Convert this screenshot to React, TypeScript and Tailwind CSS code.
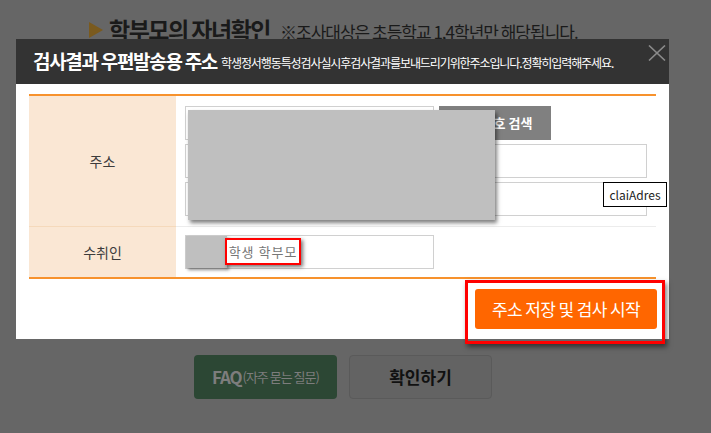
import React from "react";

const font = { fontFamily: '"Noto Sans CJK KR", "Noto Sans", sans-serif' };

function CloseIcon() {
  return (
    <svg width="18" height="16" viewBox="0 0 18 16" className="block">
      <path d="M1 0.5 L17 15.5 M17 0.5 L1 15.5" stroke="#8a8a8a" strokeWidth="1.6" fill="none" />
    </svg>
  );
}

function Arrow() {
  return (
    <svg width="14" height="16" viewBox="0 0 14 16" className="block">
      <path d="M0 0 L14 8 L0 16 Z" fill="#7a5a1e" />
    </svg>
  );
}

function AddressModal() {
  return (
    <div className="absolute left-[16px] top-[39px] w-[653px] h-[300px] bg-white">
      <div className="h-[45px] bg-[#333333] flex items-center pl-[17px] relative">
        <span className="text-white font-bold text-[19px] tracking-[-1.3px]">검사결과 우편발송용 주소</span>
        <span className="text-white text-[12px] tracking-[-1.1px] ml-[4px] mt-[3px]">
          학생정서행동특성검사실시후검사결과를보내드리기위한주소입니다.정확히입력해주세요.
        </span>
        <div className="absolute left-[632px] top-[6px]">
          <CloseIcon />
        </div>
      </div>

      <div className="px-[13px] pt-[10px]">
        <div className="border-t-2 border-b-2 border-[#f7922d]">
          <div className="flex h-[131px] border-b border-[#ececec]">
            <div className="w-[147px] bg-[#fae7d4] border-b border-[#f5d9bb] -mb-px flex items-center justify-center text-[14px] text-[#3c3c3c]">
              주소
            </div>
            <div className="flex-1 pl-[9px] pt-[10px] flex flex-col gap-[4px]">
              <div className="flex gap-[5px]">
                <div className="w-[249px] h-[34px] border border-[#d0d0d0] bg-white" />
                <div className="w-[112px] h-[34px] bg-[#808080] text-white font-bold text-[13px] flex items-center justify-center">
                  우편번호 검색
                </div>
              </div>
              <div className="w-[462px] h-[34px] border border-[#d0d0d0] bg-white" />
              <div className="w-[462px] h-[34px] border border-[#d0d0d0] bg-white" />
            </div>
          </div>
          <div className="flex h-[50px]">
            <div className="w-[147px] bg-[#fae7d4] flex items-center justify-center text-[14px] text-[#3c3c3c]">
              수취인
            </div>
            <div className="flex-1 pl-[9px] pt-[8px]">
              <div className="w-[249px] h-[34px] border border-[#d0d0d0] bg-white flex">
                <div className="w-[41px] h-[32px] bg-[#bfbfbf] shadow-[2px_2px_3px_rgba(0,0,0,0.45)]" />
              </div>
            </div>
          </div>
        </div>

        <div className="flex justify-end pt-[10px]">
          <button className="w-[182px] h-[40px] rounded-[3px] bg-[#ff6600] text-white text-[17px] tracking-[-0.6px] mr-[-1px]">
            주소 저장 및 검사 시작
          </button>
        </div>
      </div>

      {/* redaction box over the address inputs */}
      <div className="absolute left-[172px] top-[71px] w-[307px] h-[110px] bg-[#bfbfbf] shadow-[2px_3px_4px_rgba(0,0,0,0.5)]" />

      {/* highlighted recipient text */}
      <div className="absolute left-[209px] top-[199px] w-[76px] h-[27px] border-2 border-[#ff0000] bg-white shadow-[2px_2px_4px_rgba(0,0,0,0.55)] flex items-center justify-center text-[13px] text-[#777] tracking-[1px]">
        학생 학부모
      </div>

      {/* tooltip */}
      <div className="absolute left-[587px] top-[143px] w-[64px] h-[25px] bg-white border border-black flex items-center justify-center text-[12px] text-[#222]">
        claiAdres
      </div>

      {/* highlight around submit */}
      <div className="absolute left-[449px] top-[241px] w-[200px] h-[64px] border-[3px] border-[#ff0000] shadow-[2px_3px_5px_rgba(0,0,0,0.5)]" />
    </div>
  );
}

export default function App() {
  return (
    <div className="relative w-[711px] h-[433px] overflow-hidden bg-[#666666]" style={font}>
      <div className="flex items-start pl-[89px] pt-[18px] h-[46px]">
        <div className="mt-[4px]">
          <Arrow />
        </div>
        <span className="text-[#1a1a1a] font-bold text-[23px] tracking-[-1.5px] leading-none ml-[6px]">학부모의 자녀확인</span>
        <span className="text-[#1a1a1a] text-[17px] tracking-[-1px] leading-none ml-[10px] mt-[5px]">
          ※조사대상은 초등학교 1,4학년만 해당됩니다.
        </span>
      </div>

      <div className="flex gap-[12px] pl-[194px] mt-[309px]">
        <div className="w-[143px] h-[44px] rounded-[4px] bg-[#2c4734] flex items-center justify-center text-[#7d7d7d]">
          <span className="font-bold text-[17px] tracking-[-1.2px]">FAQ</span>
          <span className="text-[13px] tracking-[-1px] ml-[1px]">(자주 묻는 질문)</span>
        </div>
        <div className="w-[143px] h-[44px] rounded-[4px] bg-[#636363] border border-[#5a5a5a] flex items-center justify-center text-[#111] font-bold text-[17px]">
          확인하기
        </div>
      </div>

      <AddressModal />
    </div>
  );
}
